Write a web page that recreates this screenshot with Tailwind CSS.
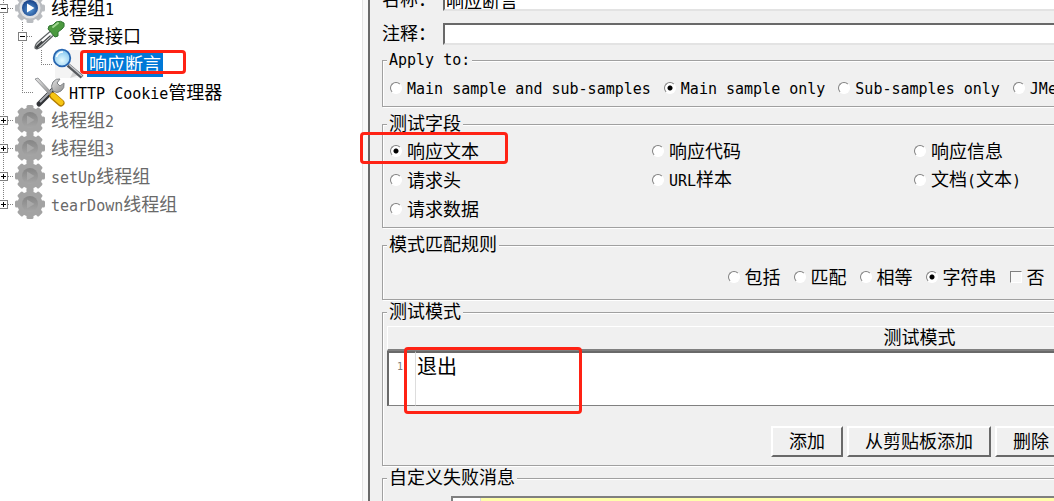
<!DOCTYPE html>
<html lang="zh-CN">

<head>
  <meta charset="UTF-8">
  <meta name="viewport" content="width=device-width, initial-scale=1.0">
  <title>响应断言</title>
  <script src="https://cdn.jsdelivr.net/npm/@tailwindcss/browser@4"></script>
</head>

<body class="relative flex h-screen overflow-hidden bg-white font-['DejaVu_Sans_Mono','Noto_Sans_CJK_SC',monospace] text-[18px] leading-5 text-black">
  <!-- Shared icons -->
  <svg class="absolute size-0">
    <defs>
      <radialGradient id="blueBall" cx="50%" cy="60%" r="60%">
        <stop offset="0" stop-color="#5b9bd8" />
        <stop offset="1" stop-color="#153f86" />
      </radialGradient>
      <linearGradient id="steel" x1="0" y1="0" x2="1" y2="1">
        <stop offset="0" stop-color="#e4e4e4" />
        <stop offset="1" stop-color="#8c8c8c" />
      </linearGradient>
      <linearGradient id="grayBall" x1="0" y1="0" x2="0" y2="1">
        <stop offset="0" stop-color="#858585" />
        <stop offset="1" stop-color="#a6a6a6" />
      </linearGradient>
      <radialGradient id="lens" cx="50%" cy="65%" r="60%">
        <stop offset="0" stop-color="#e6fbff" />
        <stop offset="1" stop-color="#86c8f0" />
      </radialGradient>
      <g id="cog">
        <circle cx="16" cy="16" r="12.5" />
        <g id="teeth">
          <rect x="12.5" y="1" width="7" height="30" rx="1.5" />
          <rect x="1" y="12.5" width="30" height="7" rx="1.5" />
        </g>
        <use href="#teeth" transform="rotate(45 16 16)" />
      </g>
    </defs>
  </svg>

  <!-- Test plan tree -->
  <nav class="-mt-1.5 w-[362px] shrink-0">
    <ul>
      <li class="flex h-7 items-center">
        <span class="relative h-7 w-3.5">
          <svg class="h-7 w-3.5" stroke="#808080" stroke-dasharray="1 1"><path d="M3.5 0V28M8 14.500H14" /></svg>
          <button aria-label="折叠" class="absolute -left-px top-2.5 flex size-[9px] items-center justify-center border border-[#808080] bg-white"><i class="h-px w-[5px] bg-black"></i></button>
        </span>
        <svg class="-my-0.5 size-8" viewBox="0 0 32 32">
          <use href="#cog" fill="#b9bcc0" />
          <circle cx="16" cy="16" r="10.500" fill="#dfe1e4" />
          <circle cx="16" cy="16" r="8" fill="url(#blueBall)" />
          <path d="M13 11.500L20.500 16L13 20.500Z" fill="#fff" />
        </svg>
        <span class="ml-[5px] pt-0.5">线程组<span class="text-[15px]">1</span></span>
      </li>
      <li class="flex h-7 items-center">
        <span class="relative h-7 w-[33px]">
          <svg class="h-7 w-[33px]" stroke="#808080" stroke-dasharray="1 1"><path d="M3.500 0V28M22.500 0V28M27 14.500H33" /></svg>
          <button aria-label="折叠" class="absolute left-[18px] top-2.5 flex size-[9px] items-center justify-center border border-[#808080] bg-white"><i class="h-px w-[5px] bg-black"></i></button>
        </span>
        <svg class="-my-0.5 size-8" viewBox="0 0 32 32">
          <path d="M19 10L22 14L8 27Q3 30 2 28Q2 24 6 21Z" fill="#dcdfdf" stroke="#5e6264" stroke-width="1.300" />
          <path d="M17 15L6 25L3 28" fill="none" stroke="#3f4244" stroke-width="2.500" />
          <path d="M18 13L9 21" stroke="#fff" stroke-width="2" />
          <path d="M16 6L20 5L23 2Q28 0 31 3Q32 7 29 9L25 12L25 16L22 17L15 9Z" fill="#4c9a3f" stroke="#2f7430" />
          <path d="M20 7L25 3" stroke="#a0d690" stroke-width="2" stroke-linecap="round" />
        </svg>
        <span class="ml-1 pt-0.5">登录接口</span>
      </li>
      <li class="flex h-7 items-center">
        <svg class="h-7 w-[52px]" stroke="#808080" stroke-dasharray="1 1"><path d="M3.500 0V28M22.500 0V28M41.500 0V14M41 14.500H52" /></svg>
        <svg class="-my-0.5 size-8" viewBox="0 0 32 32">
          <path d="M3 2H32V30H3Z" fill="#f4f4f4" />
          <path d="M18 30L22 22L27 27Z" fill="#d4d4d4" />
          <path d="M16 17L30 29" stroke="#55585c" stroke-width="4" />
          <path d="M17 16.500L30 28" stroke="#c9cbcf" stroke-width="1.500" />
          <circle cx="10" cy="10" r="8.300" fill="url(#lens)" stroke="#2866b0" stroke-width="1.800" />
          <path d="M4.500 9Q6 4 11 4" fill="none" stroke="#fff" stroke-width="1.500" />
        </svg>
        <span class="ml-[3px] bg-[#0078d7] px-0.5 pt-1 pb-0.5 text-white">响应断言</span>
      </li>
      <li class="flex h-7 items-center">
        <svg class="h-7 w-[33px]" stroke="#808080" stroke-dasharray="1 1"><path d="M3.500 0V28M22.500 0V14M22 14.500H33" /></svg>
        <svg class="-my-0.5 size-8" viewBox="0 0 32 32">
          <path d="M21 13L6 28" stroke="#303236" stroke-width="5" stroke-linecap="round" />
          <path d="M20 13L7 26" stroke="#a8abb0" stroke-width="2" />
          <path d="M20 15Q17 10 20 6Q23 2 27 3L24 7L27 10L31 7Q32 12 28 15Q24 18 20 15Z" fill="url(#steel)" stroke="#808386" />
          <path d="M2 3L5 2L19 17L17 19Z" fill="url(#steel)" stroke="#85888b" stroke-width=".800" />
          <path d="M20 20L28 27" stroke="#b27c00" stroke-width="7" stroke-linecap="round" />
          <path d="M20 19.500L28 26.500" stroke="#f6c514" stroke-width="5" stroke-linecap="round" />
        </svg>
        <span class="ml-1 pt-0.5"><span class="text-[15px]">HTTP Cookie</span>管理器</span>
      </li>
      <li class="flex h-7 items-center text-[#696969]">
        <span class="relative h-7 w-3.5">
          <svg class="h-7 w-3.5" stroke="#808080" stroke-dasharray="1 1"><path d="M3.500 0V28M8 14.500H14" /></svg>
          <button aria-label="展开" class="absolute -left-px top-2.5 flex size-[9px] items-center justify-center border border-[#808080] bg-white"><i class="h-px w-[5px] bg-black"></i><i class="absolute h-[5px] w-px bg-black"></i></button>
        </span>
        <svg class="-my-0.5 size-8" viewBox="0 0 32 32">
          <use href="#cog" fill="#a3a3a3" />
          <circle cx="16" cy="16" r="8" fill="url(#grayBall)" />
          <path d="M13 11.500L20.500 16L13 20.500Z" fill="#a9a9a9" />
        </svg>
        <span class="ml-[5px] pt-0.5">线程组<span class="text-[15px]">2</span></span>
      </li>
      <li class="flex h-7 items-center text-[#696969]">
        <span class="relative h-7 w-3.5">
          <svg class="h-7 w-3.5" stroke="#808080" stroke-dasharray="1 1"><path d="M3.500 0V28M8 14.500H14" /></svg>
          <button aria-label="展开" class="absolute -left-px top-2.5 flex size-[9px] items-center justify-center border border-[#808080] bg-white"><i class="h-px w-[5px] bg-black"></i><i class="absolute h-[5px] w-px bg-black"></i></button>
        </span>
        <svg class="-my-0.5 size-8" viewBox="0 0 32 32">
          <use href="#cog" fill="#a3a3a3" />
          <circle cx="16" cy="16" r="8" fill="url(#grayBall)" />
          <path d="M13 11.500L20.500 16L13 20.500Z" fill="#a9a9a9" />
        </svg>
        <span class="ml-[5px] pt-0.5">线程组<span class="text-[15px]">3</span></span>
      </li>
      <li class="flex h-7 items-center text-[#696969]">
        <span class="relative h-7 w-3.5">
          <svg class="h-7 w-3.5" stroke="#808080" stroke-dasharray="1 1"><path d="M3.500 0V28M8 14.500H14" /></svg>
          <button aria-label="展开" class="absolute -left-px top-2.5 flex size-[9px] items-center justify-center border border-[#808080] bg-white"><i class="h-px w-[5px] bg-black"></i><i class="absolute h-[5px] w-px bg-black"></i></button>
        </span>
        <svg class="-my-0.5 size-8" viewBox="0 0 32 32">
          <use href="#cog" fill="#a3a3a3" />
          <circle cx="16" cy="16" r="8" fill="url(#grayBall)" />
          <path d="M13 11.500L20.500 16L13 20.500Z" fill="#a9a9a9" />
        </svg>
        <span class="ml-[5px] pt-0.5"><span class="text-[15px]">setUp</span>线程组</span>
      </li>
      <li class="flex h-7 items-center text-[#696969]">
        <span class="relative h-7 w-3.5">
          <svg class="h-7 w-3.5" stroke="#808080" stroke-dasharray="1 1"><path d="M3.500 0V14M8 14.500H14" /></svg>
          <button aria-label="展开" class="absolute -left-px top-2.5 flex size-[9px] items-center justify-center border border-[#808080] bg-white"><i class="h-px w-[5px] bg-black"></i><i class="absolute h-[5px] w-px bg-black"></i></button>
        </span>
        <svg class="-my-0.5 size-8" viewBox="0 0 32 32">
          <use href="#cog" fill="#a3a3a3" />
          <circle cx="16" cy="16" r="8" fill="url(#grayBall)" />
          <path d="M13 11.500L20.500 16L13 20.500Z" fill="#a9a9a9" />
        </svg>
        <span class="ml-[5px] pt-0.5"><span class="text-[15px]">tearDown</span>线程组</span>
      </li>
    </ul>
  </nav>

  <!-- Split bar -->
  <div class="w-2 shrink-0 border-r-2 border-l border-l-[#e3e3e3] border-r-[#696969] bg-[#f8f8f8]"></div>

  <!-- Response assertion form -->
  <main class="min-w-0 flex-1 overflow-hidden bg-[#f0f0f0]">
    <form class="-mt-[11px] min-w-[1098px] px-3">
      <div class="mb-3 flex h-[22px] items-center">
        <label for="name" class="w-[61px] shrink-0">名称：</label>
        <input id="name" type="text" value="响应断言" class="h-[22px] flex-1 border-2 border-t-[#696969] border-r-white border-b-[#e3e3e3] border-l-[#696969] bg-white px-px">
      </div>
      <div class="flex h-[22px] items-center">
        <label for="comment" class="w-[61px] shrink-0">注释：</label>
        <input id="comment" type="text" class="h-[22px] flex-1 border-2 border-t-[#696969] border-r-white border-b-[#e3e3e3] border-l-[#696969] bg-white px-px">
      </div>

      <fieldset class="mt-[5px] border border-[#a0a0a0] px-[7px] pt-1 pb-0.5 shadow-[1px_1px_0_#fff,inset_1px_1px_0_#fff]">
        <legend class="-ml-[3px] bg-[#f0f0f0] px-0.5 text-[15px]">Apply to:</legend>
        <div class="flex h-[30px] items-center gap-[13px] text-[15px] whitespace-nowrap">
          <label class="flex items-center gap-[5px]"><input type="radio" name="scope" class="mb-0.5 size-3 appearance-none rounded-full border border-t-[#808080] border-r-white border-b-white border-l-[#808080] bg-white checked:bg-[radial-gradient(circle,#000_2px,#fff_3px)]">Main sample and sub-samples</label>
          <label class="flex items-center gap-[5px]"><input type="radio" name="scope" checked class="mb-0.5 size-3 appearance-none rounded-full border border-t-[#808080] border-r-white border-b-white border-l-[#808080] bg-white checked:bg-[radial-gradient(circle,#000_2px,#fff_3px)]">Main sample only</label>
          <label class="flex items-center gap-[5px]"><input type="radio" name="scope" class="mb-0.5 size-3 appearance-none rounded-full border border-t-[#808080] border-r-white border-b-white border-l-[#808080] bg-white checked:bg-[radial-gradient(circle,#000_2px,#fff_3px)]">Sub-samples only</label>
          <label class="flex items-center gap-[5px]"><input type="radio" name="scope" class="mb-0.5 size-3 appearance-none rounded-full border border-t-[#808080] border-r-white border-b-white border-l-[#808080] bg-white checked:bg-[radial-gradient(circle,#000_2px,#fff_3px)]">JMeter Variable Name to use</label>
        </div>
      </fieldset>

      <fieldset class="mt-[7px] border border-[#a0a0a0] px-[7px] pt-[3px] pb-[3px] shadow-[1px_1px_0_#fff,inset_1px_1px_0_#fff]">
        <legend class="-ml-[3px] bg-[#f0f0f0] px-0.5">测试字段</legend>
        <div class="grid auto-rows-[29px] grid-cols-[repeat(4,262px)] items-center">
          <label class="flex items-center gap-[5px]"><input type="radio" name="field" checked class="mb-0.5 size-3 appearance-none rounded-full border border-t-[#808080] border-r-white border-b-white border-l-[#808080] bg-white checked:bg-[radial-gradient(circle,#000_2px,#fff_3px)]">响应文本</label>
          <label class="flex items-center gap-[5px]"><input type="radio" name="field" class="mb-0.5 size-3 appearance-none rounded-full border border-t-[#808080] border-r-white border-b-white border-l-[#808080] bg-white checked:bg-[radial-gradient(circle,#000_2px,#fff_3px)]">响应代码</label>
          <label class="col-span-2 flex items-center gap-[5px]"><input type="radio" name="field" class="mb-0.5 size-3 appearance-none rounded-full border border-t-[#808080] border-r-white border-b-white border-l-[#808080] bg-white checked:bg-[radial-gradient(circle,#000_2px,#fff_3px)]">响应信息</label>
          <label class="flex items-center gap-[5px]"><input type="radio" name="field" class="mb-0.5 size-3 appearance-none rounded-full border border-t-[#808080] border-r-white border-b-white border-l-[#808080] bg-white checked:bg-[radial-gradient(circle,#000_2px,#fff_3px)]">请求头</label>
          <label class="flex items-center gap-[5px]"><input type="radio" name="field" class="mb-0.5 size-3 appearance-none rounded-full border border-t-[#808080] border-r-white border-b-white border-l-[#808080] bg-white checked:bg-[radial-gradient(circle,#000_2px,#fff_3px)]"><span><span class="text-[15px]">URL</span>样本</span></label>
          <label class="col-span-2 flex items-center gap-[5px]"><input type="radio" name="field" class="mb-0.5 size-3 appearance-none rounded-full border border-t-[#808080] border-r-white border-b-white border-l-[#808080] bg-white checked:bg-[radial-gradient(circle,#000_2px,#fff_3px)]"><span>文档<span class="text-[15px]">(</span>文本<span class="text-[15px]">)</span></span></label>
          <label class="flex items-center gap-[5px]"><input type="radio" name="field" class="mb-0.5 size-3 appearance-none rounded-full border border-t-[#808080] border-r-white border-b-white border-l-[#808080] bg-white checked:bg-[radial-gradient(circle,#000_2px,#fff_3px)]">请求数据</label>
        </div>
      </fieldset>

      <fieldset class="mt-[7px] border border-[#a0a0a0] px-[7px] pt-2 pb-[7px] shadow-[1px_1px_0_#fff,inset_1px_1px_0_#fff]">
        <legend class="-ml-[3px] bg-[#f0f0f0] px-0.5">模式匹配规则</legend>
        <div class="flex h-[29px] items-center justify-center gap-[13px]">
          <label class="flex items-center gap-[5px]"><input type="radio" name="rule" class="mb-0.5 size-3 appearance-none rounded-full border border-t-[#808080] border-r-white border-b-white border-l-[#808080] bg-white checked:bg-[radial-gradient(circle,#000_2px,#fff_3px)]">包括</label>
          <label class="flex items-center gap-[5px]"><input type="radio" name="rule" class="mb-0.5 size-3 appearance-none rounded-full border border-t-[#808080] border-r-white border-b-white border-l-[#808080] bg-white checked:bg-[radial-gradient(circle,#000_2px,#fff_3px)]">匹配</label>
          <label class="flex items-center gap-[5px]"><input type="radio" name="rule" class="mb-0.5 size-3 appearance-none rounded-full border border-t-[#808080] border-r-white border-b-white border-l-[#808080] bg-white checked:bg-[radial-gradient(circle,#000_2px,#fff_3px)]">相等</label>
          <label class="flex items-center gap-[5px]"><input type="radio" name="rule" checked class="mb-0.5 size-3 appearance-none rounded-full border border-t-[#808080] border-r-white border-b-white border-l-[#808080] bg-white checked:bg-[radial-gradient(circle,#000_2px,#fff_3px)]">字符串</label>
          <label class="flex items-center gap-[5px]"><input type="checkbox" class="mb-0.5 size-3 appearance-none border border-t-[#808080] border-r-white border-b-white border-l-[#808080] bg-[#f8f8f8] checked:bg-black">否</label>
          <label class="flex items-center gap-[5px]"><input type="checkbox" class="mb-0.5 size-3 appearance-none border border-t-[#808080] border-r-white border-b-white border-l-[#808080] bg-[#f8f8f8] checked:bg-black">或者</label>
        </div>
      </fieldset>

      <fieldset class="mt-0.5 border border-[#a0a0a0] px-1 pb-2 shadow-[1px_1px_0_#fff,inset_1px_1px_0_#fff]">
        <legend class="bg-[#f0f0f0] px-0.5">测试模式</legend>
        <table class="mt-1 w-full border-separate border-spacing-0">
          <thead>
            <tr>
              <th colspan="2" class="h-[25px] border-t border-b-2 border-l border-t-white border-b-[#808080] border-l-white p-0 font-normal">测试模式</th>
            </tr>
          </thead>
          <tbody>
            <tr>
              <td class="h-[55px] w-7 border-t-2 border-b border-l-2 border-t-[#696969] border-b-[#808080] border-l-[#696969] bg-white pt-1 pr-3 text-right align-top text-[10px] text-[#808080]">1</td>
              <td class="border-t-2 border-b border-l border-t-[#696969] border-b-[#808080] border-l-[#dddddd] bg-white pt-1 pl-px align-top text-[20px]">退出</td>
            </tr>
          </tbody>
        </table>
        <div class="mt-5 flex justify-center gap-1">
          <button type="button" class="h-[31px] border-2 border-t-white border-r-[#696969] border-b-[#696969] border-l-white px-4">添加</button>
          <button type="button" class="h-[31px] border-2 border-t-white border-r-[#696969] border-b-[#696969] border-l-white px-4">从剪贴板添加</button>
          <button type="button" class="h-[31px] border-2 border-t-white border-r-[#696969] border-b-[#696969] border-l-white px-4">删除</button>
        </div>
      </fieldset>

      <fieldset class="mt-0.5 border border-[#a0a0a0] px-1 pb-2 shadow-[1px_1px_0_#fff,inset_1px_1px_0_#fff]">
        <legend class="bg-[#f0f0f0] px-0.5">自定义失败消息</legend>
        <div class="mt-2 ml-16 flex h-20 border-2 border-[#808080] bg-white">
          <div class="w-7 border-r border-[#dddddd]"></div>
          <textarea aria-label="自定义失败消息" class="flex-1 resize-none bg-[#ffffaa]"></textarea>
        </div>
      </fieldset>
    </form>
  </main>

  <!-- Highlight marks -->
  <div class="pointer-events-none absolute top-[50px] left-20 h-6 w-[106px] rounded-sm border-3 border-[#ff2214]"></div>
  <div class="pointer-events-none absolute top-[132px] left-[360px] h-8 w-[148px] rounded-sm border-3 border-[#ff2214]"></div>
  <div class="pointer-events-none absolute top-[347px] left-[404px] h-[67px] w-[178px] rounded-sm border-3 border-[#ff2214]"></div>
</body>

</html>
